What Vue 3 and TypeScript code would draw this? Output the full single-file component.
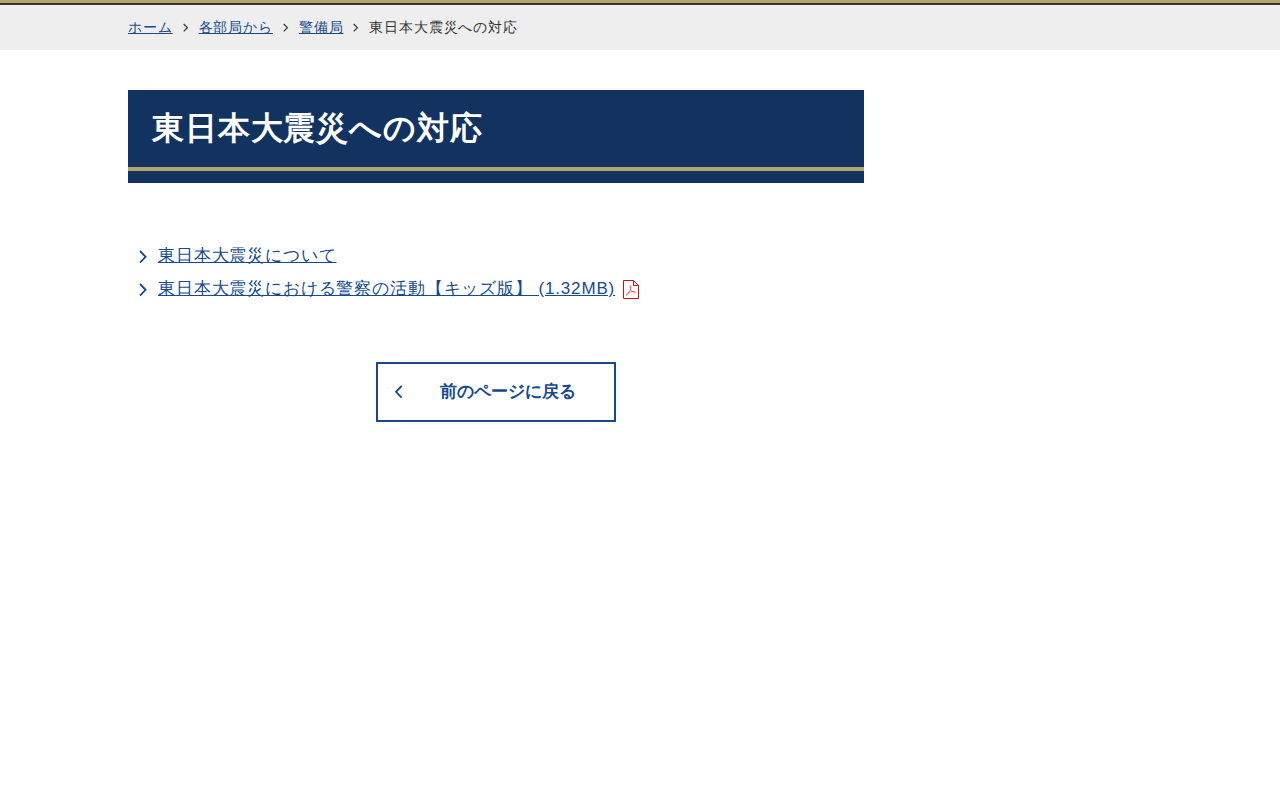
<script setup lang="ts">
interface Crumb {
  label: string
  href?: string
}

interface DocumentLink {
  label: string
  href: string
  pdf: boolean
}

const title = '東日本大震災への対応'

const crumbs: Crumb[] = [
  { label: 'ホーム', href: '#home' },
  { label: '各部局から', href: '#bureau' },
  { label: '警備局', href: '#security' },
  { label: title },
]

const links: DocumentLink[] = [
  { label: '東日本大震災について', href: '#about', pdf: false },
  { label: '東日本大震災における警察の活動【キッズ版】 (1.32MB)', href: '#kids', pdf: true },
]

const goBack = (): void => window.history.back()
</script>

<template>
  <div class="page">
    <nav class="breadcrumb" aria-label="パンくずリスト">
      <ol class="container crumbs">
        <li v-for="crumb in crumbs" :key="crumb.label" class="crumb">
          <a v-if="crumb.href" :href="crumb.href">{{ crumb.label }}</a>
          <span v-else aria-current="page">{{ crumb.label }}</span>
          <svg v-if="crumb.href" class="crumb-arrow" viewBox="0 0 6 10" aria-hidden="true">
            <path d="M.7 1 4.4 4.7 .7 8.4" />
          </svg>
        </li>
      </ol>
    </nav>

    <div class="container">
      <main class="main">
        <h1 class="title"><span class="title-text">{{ title }}</span></h1>

        <ul class="links">
          <li v-for="link in links" :key="link.href" class="link-item">
            <svg class="link-arrow" viewBox="0 0 10 16" aria-hidden="true">
              <path d="M2 3 7.6 8.8 2 14.6" />
            </svg>
            <a :href="link.href">{{ link.label }}</a>
            <svg v-if="link.pdf" class="pdf" viewBox="0 0 16 21" role="img" aria-label="PDF">
              <path d="M.5 2.5H10.5L15.5 7.5V20.5H.5ZM10.5 2.5V7.5H15.5" />
              <path class="pdf-mark" d="M7.4 7.6C6.6 7.8 7 9.8 7.8 11.5 8.8 13.3 11 14.8 12.6 14.6 13.6 14 11.5 13.2 9 13.5 6.5 13.8 4.5 15 3.3 16.4 2.6 17.6 4 17.7 5 16 6.5 13.8 8.1 11 8.1 8.8 8.1 7.9 7.8 7.5 7.4 7.6Z" />
            </svg>
          </li>
        </ul>

        <button class="back" type="button" @click="goBack">
          <svg class="back-arrow" viewBox="0 0 10 16" aria-hidden="true">
            <path d="M7.6 3 2 8.8 7.6 14.6" />
          </svg>
          <span class="back-label">前のページに戻る</span>
        </button>
      </main>
    </div>
  </div>
</template>

<style>
body {
  margin: 0;
  background: #fff;
}
</style>

<style scoped>
.page {
  border-top: 3px solid #b4a46c;
  color: #333;
  font-family: "Liberation Sans", sans-serif;
  font-size: 17px;
  line-height: 25px;
  letter-spacing: 0.05em;
}

a {
  color: #174a8c;
}

.container {
  width: 80%;
  margin: 0 auto;
}

.breadcrumb {
  border-top: 2px solid #333;
  background: #eee;
}

.crumbs {
  display: flex;
  flex-wrap: wrap;
  padding: 10px 0;
  font-size: 14px;
  list-style: none;
}

.crumb {
  display: flex;
  align-items: center;
}

.crumb-arrow {
  width: 6px;
  height: 10px;
  margin: 0 10px;
  fill: none;
  stroke: #333;
  stroke-width: 1.2;
}

.main {
  max-width: 736px;
  padding-top: 40px;
}

.title {
  margin: 0;
  padding-bottom: 12px;
  background: #12335f;
  color: #fff;
  font-size: 32px;
  line-height: 45px;
}

.title-text {
  display: block;
  padding: 16px 24px;
  border-bottom: 4px solid #b4a46c;
}

.links {
  display: grid;
  gap: 8px;
  margin: 60px 0 0;
  padding: 0 0 0 10px;
  list-style: none;
}

.link-item {
  display: flex;
  align-items: center;
}

.link-arrow {
  flex: none;
  width: 10px;
  height: 16px;
  margin-right: 10px;
  fill: none;
  stroke: #174a8c;
  stroke-width: 1.8;
}

.pdf {
  flex: none;
  width: 16px;
  height: 21px;
  margin-left: 8px;
  fill: none;
  stroke: #d01010;
}

.pdf-mark {
  stroke-width: 0.5;
}

.back {
  display: flex;
  align-items: center;
  width: 240px;
  height: 60px;
  margin: 61px auto 0;
  padding: 0 16px 2px;
  border: 2px solid #174a8c;
  background: #fff;
  color: #174a8c;
  font-family: inherit;
  font-size: 17px;
  font-weight: 700;
  line-height: 25px;
  cursor: pointer;
}

.back-arrow {
  flex: none;
  width: 10px;
  height: 16px;
  fill: none;
  stroke: #174a8c;
  stroke-width: 1.8;
}

.back-label {
  padding-left: 36px;
  white-space: nowrap;
}
</style>
